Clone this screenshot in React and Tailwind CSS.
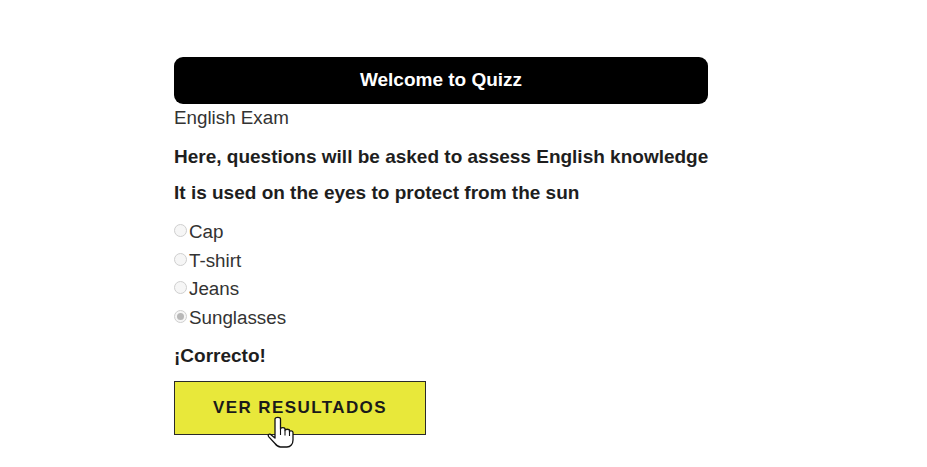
export default function App() {
  const options = [
    { label: "Cap", checked: false },
    { label: "T-shirt", checked: false },
    { label: "Jeans", checked: false },
    { label: "Sunglasses", checked: true },
  ];
  return (
    <div
      className="w-[927px] h-[467px] bg-white overflow-hidden text-[#1e1e1e]"
      style={{ fontFamily: '"Liberation Sans", Arial, sans-serif' }}
    >
      <div className="ml-[174px] w-[534px] pt-[57px] flex flex-col">
        <div className="h-[47px] bg-black rounded-[9px] flex items-center justify-center text-white font-bold text-[19px]">
          Welcome to Quizz
        </div>
        <div className="h-[28px] flex items-center text-[18.8px] text-[#333]">English Exam</div>
        <div className="mt-[11px] h-[28px] flex items-center text-[19px] font-bold whitespace-nowrap">
          Here, questions will be asked to assess English knowledge
        </div>
        <div className="mt-[8px] h-[28px] flex items-center text-[19px] font-bold">
          It is used on the eyes to protect from the sun
        </div>
        <div className="mt-[10.6px] flex flex-col">
          {options.map((o) => (
            <div key={o.label} className="h-[28.7px] flex items-center text-[18.8px] text-[#333]">
              <span className="w-[13px] h-[13px] rounded-full border border-[#cfcfcf] bg-[#f6f6f6] flex items-center justify-center mr-[2px] mt-[-3px]">
                {o.checked && <span className="w-[7px] h-[7px] rounded-full bg-[#b8b8b8]" />}
              </span>
              <span>{o.label}</span>
            </div>
          ))}
        </div>
        <div className="mt-[9.6px] h-[28px] flex items-center text-[19px] font-bold">¡Correcto!</div>
        <div className="mt-[11px] relative w-[252px]">
          <button className="w-[252px] h-[54px] bg-[#e8e83a] border border-[#2a2a2a] flex items-center justify-center font-bold text-[17px] tracking-[1.4px] text-[#1a1a1a]">
            VER RESULTADOS
          </button>
          <svg
            className="absolute left-[93px] top-[35px]"
            width="27"
            height="32"
            viewBox="0 0 27 32"
          >
            <path
              d="M8 3C8 0.8 13.5 0.8 13.5 3V13C13.5 11.2 18 11.2 18 13V14.5C18 12.8 22.5 12.8 22.5 14.5V16C22.5 14.3 26 14.3 26 16.5V24C26 28 23.5 31 20 31H13.5C11 31 9.5 29.5 8 27.5L1.6 20.6C0.6 19.2 1.8 17.4 3.6 18.4L8 22Z"
              fill="white"
              stroke="#111"
              strokeWidth="1.3"
              strokeLinejoin="round"
            />
            <path d="M13.5 13V19M18 14.5V19.5M22.5 16V20" stroke="#111" strokeWidth="1.1" />
          </svg>
        </div>
      </div>
    </div>
  );
}
